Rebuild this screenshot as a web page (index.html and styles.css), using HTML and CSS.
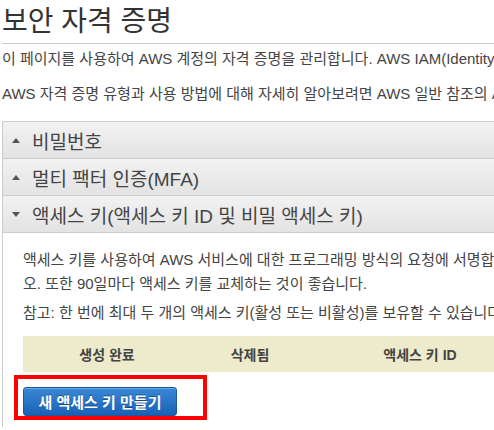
FILE: index.html
```html
<!DOCTYPE html>
<html lang="ko">
<head>
<meta charset="utf-8">
<link rel="stylesheet" href="styles.css">
</head>
<body>
<div class="page">
  <h1 class="title">보안 자격 증명</h1>
  <p class="intro">이 페이지를 사용하여 AWS 계정의 자격 증명을 관리합니다. AWS IAM(Identity and Access Management)을 사용하여 사용자를 관리합니다.</p>
  <p class="intro second">AWS 자격 증명 유형과 사용 방법에 대해 자세히 알아보려면 AWS 일반 참조의 AWS 보안 자격 증명을 참조하십시오.</p>

  <div class="accordion">
    <div class="acc-head">
      <svg class="tri" width="8" height="5" viewBox="0 0 8 5"><path d="M0 5 L4 0 L8 5 Z" fill="#555"/></svg>
      <span>비밀번호</span>
    </div>
    <div class="acc-head">
      <svg class="tri" width="8" height="5" viewBox="0 0 8 5"><path d="M0 5 L4 0 L8 5 Z" fill="#555"/></svg>
      <span>멀티 팩터 인증(MFA)</span>
    </div>
    <div class="acc-head">
      <svg class="tri" width="8" height="5" viewBox="0 0 8 5"><path d="M0 0 L8 0 L4 5 Z" fill="#555"/></svg>
      <span>액세스 키(액세스 키 ID 및 비밀 액세스 키)</span>
    </div>
    <div class="acc-panel">
      <p class="panel-text">액세스 키를 사용하여 AWS 서비스에 대한 프로그래밍 방식의 요청에 서명합니다. 보안을 위해 액세스 키를 안전하게 보관하십시<br>오. 또한 90일마다 액세스 키를 교체하는 것이 좋습니다.</p>
      <p class="panel-text">참고: 한 번에 최대 두 개의 액세스 키(활성 또는 비활성)를 보유할 수 있습니다.</p>
      <div class="keys-table">
        <div class="th">생성 완료</div>
        <div class="th">삭제됨</div>
        <div class="th">액세스 키 ID</div>
        <div class="th">마지막 사용</div>
      </div>
      <div class="btn-wrap">
        <button class="btn-primary">새 액세스 키 만들기</button>
        <div class="highlight"></div>
      </div>
    </div>
  </div>
</div>
</body>
</html>
```
FILE: styles.css
```css
html, body {
  margin: 0;
  padding: 0;
  background: #fff;
  overflow: hidden;
}
body {
  font-family: "Liberation Sans", "Noto Sans CJK KR", sans-serif;
  color: #444;
}
.page {
  width: 900px;
  margin-left: 2px;
}
.title {
  margin: 0;
  font-size: 28px;
  font-weight: normal;
  line-height: 40px;
  color: #333;
  padding: 2px 0 1px 0;
  border-bottom: 1px solid #ccc;
  white-space: nowrap;
}
.intro {
  margin: 5px 0 0 0;
  font-size: 15px;
  line-height: 20px;
  white-space: nowrap;
  color: #444;
}
.intro.second {
  margin-top: 15px;
}
.accordion {
  margin-top: 17px;
  border-left: 1px solid #ccc;
}
.acc-head {
  display: flex;
  align-items: center;
  height: 36px;
  border-top: 1px solid #ccc;
  background: linear-gradient(#f2f2f2, #e3e3e3);
  font-size: 19px;
  color: #444;
  white-space: nowrap;
}
.tri {
  margin: 0 12px 0 9px;
  flex: none;
}
.acc-panel {
  border-top: 1px solid #ccc;
  padding: 15px 0 0 20px;
}
.panel-text {
  margin: 0 0 5px 0;
  font-size: 15px;
  line-height: 24px;
  white-space: nowrap;
  color: #444;
}
.keys-table {
  margin-top: 11px;
  display: grid;
  grid-template-columns: 168px 118px 222px 200px;
  height: 36px;
  background: #edebcb;
}
.th {
  display: flex;
  align-items: center;
  justify-content: center;
  font-size: 14px;
  font-weight: bold;
  color: #444;
  white-space: nowrap;
}
.btn-wrap {
  position: relative;
  padding-top: 15px;
  height: 40px;
}
.btn-primary {
  display: block;
  width: 154px;
  height: 29px;
  border: 1px solid #1b5a9e;
  border-radius: 3px;
  background: linear-gradient(#3a88d6, #1961b6);
  color: #fff;
  font-family: "Liberation Sans", "Noto Sans CJK KR", sans-serif;
  font-size: 15px;
  font-weight: bold;
  text-shadow: 0 -1px 0 rgba(0,0,0,0.35);
  padding: 0;
  box-shadow: inset 0 1px 0 rgba(255,255,255,0.25);
}
.highlight {
  position: absolute;
  left: -9px;
  top: 3px;
  width: 185px;
  height: 37px;
  border: 4px solid #ff0000;
}
```
